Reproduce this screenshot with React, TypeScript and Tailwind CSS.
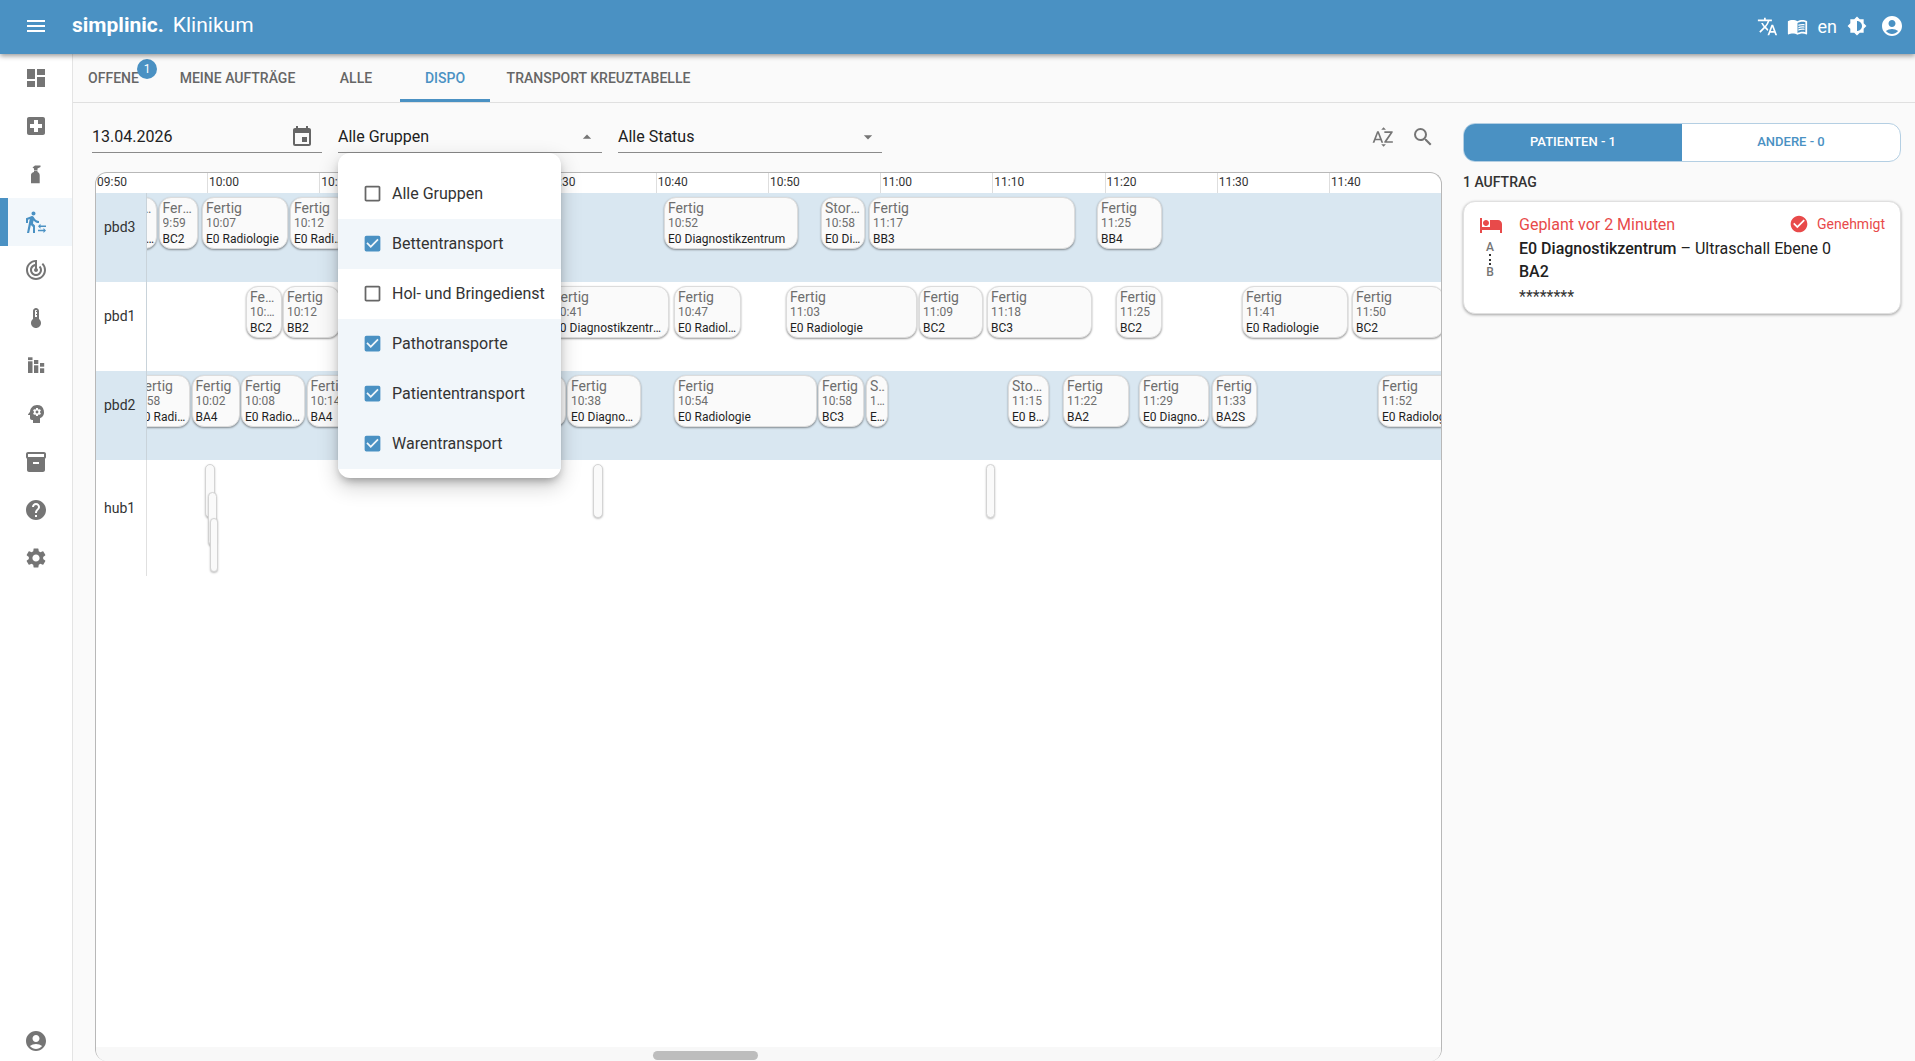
import React from "react";
import {
  MdMenu, MdDashboard, MdLocalHospital, MdTransferWithinAStation, MdTrackChanges, MdDeviceThermostat,
  MdPsychology, MdInventory2, MdHelp, MdSettings, MdAccountCircle, MdTranslate, MdMenuBook, MdBrightness6,
  MdEvent, MdSearch, MdSortByAlpha, MdArrowDropUp, MdArrowDropDown, MdCheckBox, MdCheckBoxOutlineBlank,
  MdHotel, MdCheckCircle,
} from "react-icons/md";

const TRACK_X = 147;

type Job = { x: number; r: number; a?: string; b: string; c: string };

const rows: { name: string; band: boolean; jobs: Job[] }[] = [
  {
    name: "pbd3",
    band: true,
    jobs: [
      { x: 118, r: 157, b: "9:58", c: "E0 Radiologie" },
      { x: 158.5, r: 198, b: "9:59", c: "BC2" },
      { x: 202, r: 287.5, b: "10:07", c: "E0 Radiologie" },
      { x: 290, r: 348, b: "10:12", c: "E0 Radiologie" },
      { x: 664, r: 798, b: "10:52", c: "E0 Diagnostikzentrum" },
      { x: 821, r: 865, a: "Storniert", b: "10:58", c: "E0 Diagnostikzentrum" },
      { x: 869, r: 1075, b: "11:17", c: "BB3" },
      { x: 1097, r: 1162, b: "11:25", c: "BB4" },
    ],
  },
  {
    name: "pbd1",
    band: false,
    jobs: [
      { x: 246, r: 282, b: "10:10", c: "BC2" },
      { x: 283, r: 340, b: "10:12", c: "BB2" },
      { x: 549, r: 669, b: "10:41", c: "E0 Diagnostikzentrum" },
      { x: 674, r: 741, b: "10:47", c: "E0 Radiologie" },
      { x: 786, r: 917, b: "11:03", c: "E0 Radiologie" },
      { x: 919, r: 983, b: "11:09", c: "BC2" },
      { x: 987, r: 1092, b: "11:18", c: "BC3" },
      { x: 1116, r: 1162, b: "11:25", c: "BC2" },
      { x: 1242, r: 1348, b: "11:41", c: "E0 Radiologie" },
      { x: 1352, r: 1444, b: "11:50", c: "BC2" },
    ],
  },
  {
    name: "pbd2",
    band: true,
    jobs: [
      { x: 133, r: 190, b: "9:58", c: "E0 Radiologie" },
      { x: 191.5, r: 240, b: "10:02", c: "BA4" },
      { x: 241, r: 305, b: "10:08", c: "E0 Radiologie" },
      { x: 306.5, r: 350, b: "10:14", c: "BA4" },
      { x: 500, r: 566, b: "10:30", c: "BA4" },
      { x: 567, r: 641, b: "10:38", c: "E0 Diagnostikzentrum" },
      { x: 674, r: 817, b: "10:54", c: "E0 Radiologie" },
      { x: 818, r: 864, b: "10:58", c: "BC3" },
      { x: 866, r: 888, a: "Storniert", b: "11:00", c: "E0 Radiologie" },
      { x: 1008, r: 1049, a: "Storniert", b: "11:15", c: "E0 Bettenzentrale" },
      { x: 1063, r: 1129, b: "11:22", c: "BA2" },
      { x: 1139, r: 1209, b: "11:29", c: "E0 Diagnostikzentrum" },
      { x: 1212, r: 1257, b: "11:33", c: "BA2S" },
      { x: 1378, r: 1480, b: "11:52", c: "E0 Radiologie" },
    ],
  },
];

const hubSlots = [
  { x: 205, r: 215, t: 4 },
  { x: 208, r: 217, t: 32 },
  { x: 210, r: 218, t: 58 },
  { x: 593, r: 603, t: 4 },
  { x: 986, r: 995, t: 4 },
];

const ticks = ["09:50", "10:00", "10:10", "10:20", "10:30", "10:40", "10:50", "11:00", "11:10", "11:20", "11:30", "11:40"];

const groups = [
  { label: "Alle Gruppen", on: false },
  { label: "Bettentransport", on: true },
  { label: "Hol- und Bringedienst", on: false },
  { label: "Pathotransporte", on: true },
  { label: "Patiententransport", on: true },
  { label: "Warentransport", on: true },
];

function SprayIcon() {
  return (
    <svg viewBox="0 0 24 24" width="24" height="24" fill="currentColor">
      <path d="M8.5 5.5 11 3.5h5.5V5l-3 1.5V8H10V6.5z" />
      <path d="M10 8.6h3.5V10c1.4.7 2.2 1.8 2.2 3.2v8.1H7V13c0-1.4.9-2.4 3-3z" />
    </svg>
  );
}

function BarsIcon() {
  return (
    <svg viewBox="0 0 24 24" width="24" height="24" fill="currentColor">
      <rect x="4" y="3.3" width="4.5" height="2.8" />
      <rect x="4" y="7.3" width="4.5" height="11.7" />
      <rect x="10" y="6" width="4.3" height="4" />
      <rect x="10" y="11.3" width="4.3" height="7.7" />
      <rect x="16" y="9" width="4.2" height="3.7" />
      <rect x="16" y="14.3" width="4.2" height="4.7" />
    </svg>
  );
}

const navItems: { icon: React.ReactNode; active?: boolean }[] = [
  { icon: <MdDashboard size={24} /> },
  { icon: <MdLocalHospital size={24} /> },
  { icon: <SprayIcon /> },
  { icon: <MdTransferWithinAStation size={24} />, active: true },
  { icon: <MdTrackChanges size={24} /> },
  { icon: <MdDeviceThermostat size={24} /> },
  { icon: <BarsIcon /> },
  { icon: <MdPsychology size={24} /> },
  { icon: <MdInventory2 size={24} /> },
  { icon: <MdHelp size={24} /> },
  { icon: <MdSettings size={24} /> },
];

function Card({ job }: { job: Job }) {
  return (
    <div
      className="absolute h-[52px] overflow-hidden rounded-[12px] border border-[#dcdcdc] bg-[#fafafa] pl-[3px] pr-[2px] pt-[3px] shadow-[0_1px_2px_rgba(0,0,0,0.4)]"
      style={{ left: job.x - TRACK_X, width: job.r - job.x }}
    >
      <div className="truncate text-[14px] leading-[15.4px] text-[#6e6e6e]">{job.a ?? "Fertig"}</div>
      <div className="truncate text-[12px] leading-[15.4px] text-[#6e6e6e]">{job.b}</div>
      <div className="truncate text-[12px] leading-[15.4px] text-[#1f1f1f]">{job.c}</div>
    </div>
  );
}

export default function App() {
  return (
    <div className="flex h-screen w-screen flex-col overflow-hidden bg-[#fafafa] font-['Roboto',sans-serif] text-[#212121]">
      <header className="relative z-30 flex h-[54px] shrink-0 items-center bg-[#4a91c3] pb-[2px] text-white shadow-[0_2px_5px_rgba(0,0,0,0.4)]">
        <MdMenu size={24} className="ml-[24px]" />
        <span className="ml-[24px] text-[21px] font-bold">simplinic.</span>
        <span className="ml-[9px] text-[21px]">Klinikum</span>
        <div className="ml-auto flex items-center pr-[11px]">
          <MdTranslate size={21} className="mr-[9px]" />
          <MdMenuBook size={21} className="mr-[10px]" />
          <span className="mr-[10px] text-[18px]">en</span>
          <MdBrightness6 size={20} className="mr-[13px]" />
          <MdAccountCircle size={24} />
        </div>
      </header>

      <div className="flex min-h-0 flex-1">
        <aside className="flex w-[73px] shrink-0 flex-col border-r border-[#e4e4e4] bg-white pt-0 text-[#757575]">
          {navItems.map((n, i) => (
            <div
              key={i}
              className={
                n.active
                  ? "flex h-[48px] shrink-0 items-center justify-center border-l-[8px] border-[#4a91c3] bg-[#f2f7fb] pr-[8px] text-[#4a91c3]"
                  : "flex h-[48px] shrink-0 items-center justify-center"
              }
            >
              {n.icon}
            </div>
          ))}
          <div className="mt-auto flex h-[32px] items-start justify-center">
            <MdAccountCircle size={24} />
          </div>
        </aside>

        <main className="flex min-w-0 flex-1 flex-col">
          <nav className="flex h-[49px] shrink-0 items-stretch border-b border-[#e0e0e0] text-[14px] font-medium uppercase text-[#666]">
            <div className="relative mr-[9px] flex w-[81px] items-center justify-center">
              OFFENE
              <span className="absolute left-[64px] top-[5px] flex h-[20px] w-[20px] items-center justify-center rounded-full bg-[#4a91c3] text-[12px] font-normal text-white">1</span>
            </div>
            <div className="flex w-[149px] items-center justify-center">MEINE AUFTRÄGE</div>
            <div className="flex w-[88px] items-center justify-center">ALLE</div>
            <div className="flex w-[90px] items-center justify-center border-b-[3px] border-[#4a91c3] pt-[3px] text-[#4a91c3]">DISPO</div>
            <div className="flex w-[217px] items-center justify-center">TRANSPORT KREUZTABELLE</div>
          </nav>

          <div className="flex min-h-0 flex-1 gap-[20px] pr-[14px]">
            <section className="flex min-w-0 flex-1 flex-col pl-[19px]">
              <div className="relative z-20 mb-[20px] mt-[17px] flex h-[32px] shrink-0 items-center gap-[16px] pr-[7px]">
                <div className="flex h-[33px] w-[230px] items-center justify-between border-b border-[#8a8a8a] pr-[8px] pt-[2px] text-[16px]">
                  13.04.2026
                  <MdEvent size={24} className="text-[#666]" />
                </div>
                <div className="relative flex h-[33px] w-[264px] items-center justify-between border-b border-[#8a8a8a] pr-[5px] pt-[2px] text-[16px]">
                  Alle Gruppen
                  <MdArrowDropUp size={20} className="text-[#757575]" />
                  <div className="absolute left-0 top-[33px] z-30 w-[223px] rounded-[12px] bg-white pb-[9px] pt-[16px] shadow-[0_5px_10px_-3px_rgba(0,0,0,0.35),0_8px_20px_2px_rgba(0,0,0,0.16)]">
                    {groups.map((g) => (
                      <div key={g.label} className={g.on ? "flex h-[50px] items-center bg-[#f1f6fa] pl-[24px]" : "flex h-[50px] items-center pl-[24px]"}>
                        {g.on ? (
                          <MdCheckBox size={21} className="mr-[9px] text-[#4a91c3]" />
                        ) : (
                          <MdCheckBoxOutlineBlank size={21} className="mr-[9px] text-[#666]" />
                        )}
                        <span className="whitespace-nowrap text-[16px] text-[#333]">{g.label}</span>
                      </div>
                    ))}
                  </div>
                </div>
                <div className="flex h-[33px] w-[264px] items-center justify-between border-b border-[#8a8a8a] pr-[4px] pt-[2px] text-[16px]">
                  Alle Status
                  <MdArrowDropDown size={20} className="text-[#757575]" />
                </div>
                <div className="ml-auto flex items-center gap-[16px] pt-[2px] text-[#757575]">
                  <MdSortByAlpha size={24} />
                  <MdSearch size={24} />
                </div>
              </div>

              <div className="ml-[3px] flex min-h-0 flex-1 flex-col overflow-hidden rounded-[12px] border-x border-t border-[#b8b8b8] bg-white">
                <div className="flex h-[20px] shrink-0 overflow-hidden">
                  {ticks.map((t, i) => (
                    <div
                      key={t}
                      className={
                        i === 0
                          ? "w-[111px] shrink-0 pl-[1px] text-[12px] leading-[19px] text-[#333]"
                          : "w-[112.2px] shrink-0 border-l border-[#dedede] pl-[1px] text-[12px] leading-[19px] text-[#333]"
                      }
                    >
                      {t}
                    </div>
                  ))}
                </div>

                {rows.map((row) => (
                  <div key={row.name} className={row.band ? "flex h-[89px] shrink-0 bg-[#d9e7f1]" : "flex h-[89px] shrink-0 bg-white"}>
                    <div className="w-[51px] shrink-0 border-r border-[#c9d3da] pl-[8px] pt-[25px] text-[14px] leading-[18px] text-[#333]">{row.name}</div>
                    <div className="relative min-w-0 flex-1 overflow-hidden pt-[4px]">
                      {row.jobs.map((j) => (
                        <Card key={j.x} job={j} />
                      ))}
                    </div>
                  </div>
                ))}

                <div className="flex h-[116px] shrink-0">
                  <div className="w-[51px] shrink-0 border-r border-[#e0e0e0] pl-[8px] pt-[39px] text-[14px] leading-[18px] text-[#333]">hub1</div>
                  <div className="relative min-w-0 flex-1">
                    {hubSlots.map((s) => (
                      <div
                        key={s.x}
                        className="absolute h-[54px] rounded-[5px] border border-[#d4d4d4] bg-[#fafafa] shadow-[0_1px_2px_rgba(0,0,0,0.25)]"
                        style={{ left: s.x - TRACK_X, width: s.r - s.x, top: s.t }}
                      />
                    ))}
                  </div>
                </div>

                <div className="flex-1" />

                <div className="h-[14px] shrink-0 bg-[#f8f8f8] pt-[4px]">
                  <div className="ml-[557px] h-[9px] w-[105px] rounded-[5px] bg-[#bdbdbd]" />
                </div>
              </div>
            </section>

            <aside className="w-[439px] shrink-0 pl-[1px] pt-[20px]">
              <div className="flex h-[39px] overflow-hidden rounded-[12px] border border-[#b4cfe3] bg-white text-[13px] font-medium uppercase">
                <div className="flex w-[218px] items-center justify-center bg-[#4a91c3] pb-[2px] text-white">PATIENTEN - 1</div>
                <div className="flex flex-1 items-center justify-center pb-[2px] text-[#4a91c3]">ANDERE - 0</div>
              </div>
              <div className="mt-[11px] text-[14px] font-medium leading-[18px] text-[#333]">1 AUFTRAG</div>
              <div className="mt-[10px] flex h-[113px] rounded-[12px] border border-[#e0e0e0] bg-white pl-[15px] pr-[15px] pt-[11px] shadow-[0_1px_3px_rgba(0,0,0,0.35)]">
                <div className="flex w-[40px] shrink-0 flex-col items-start">
                  <MdHotel size={24} className="text-[#e84a4a]" />
                  <div className="ml-[5px] mt-[4px] flex w-[12px] flex-col items-center text-[12px] font-medium leading-[12px] text-[#757575]">
                    <span>A</span>
                    <span className="my-[1px] h-[11px] border-l-2 border-dotted border-[#333]" />
                    <span>B</span>
                  </div>
                </div>
                <div className="min-w-0 flex-1">
                  <div className="flex h-[24px] items-center justify-between">
                    <span className="text-[16px] text-[#e84a4a]">Geplant vor 2 Minuten</span>
                    <span className="flex items-center pb-[2px] text-[14px] text-[#e84a4a]">
                      <MdCheckCircle size={20} className="mr-[8px]" />
                      Genehmigt
                    </span>
                  </div>
                  <div className="text-[16px] leading-[23px] text-[#212121]">
                    <span className="font-medium">E0 Diagnostikzentrum</span> – Ultraschall Ebene 0
                  </div>
                  <div className="text-[16px] font-medium leading-[24px] text-[#212121]">BA2</div>
                  <div className="text-[16px] leading-[25px] text-[#333]">********</div>
                </div>
              </div>
            </aside>
          </div>
        </main>
      </div>
    </div>
  );
}
